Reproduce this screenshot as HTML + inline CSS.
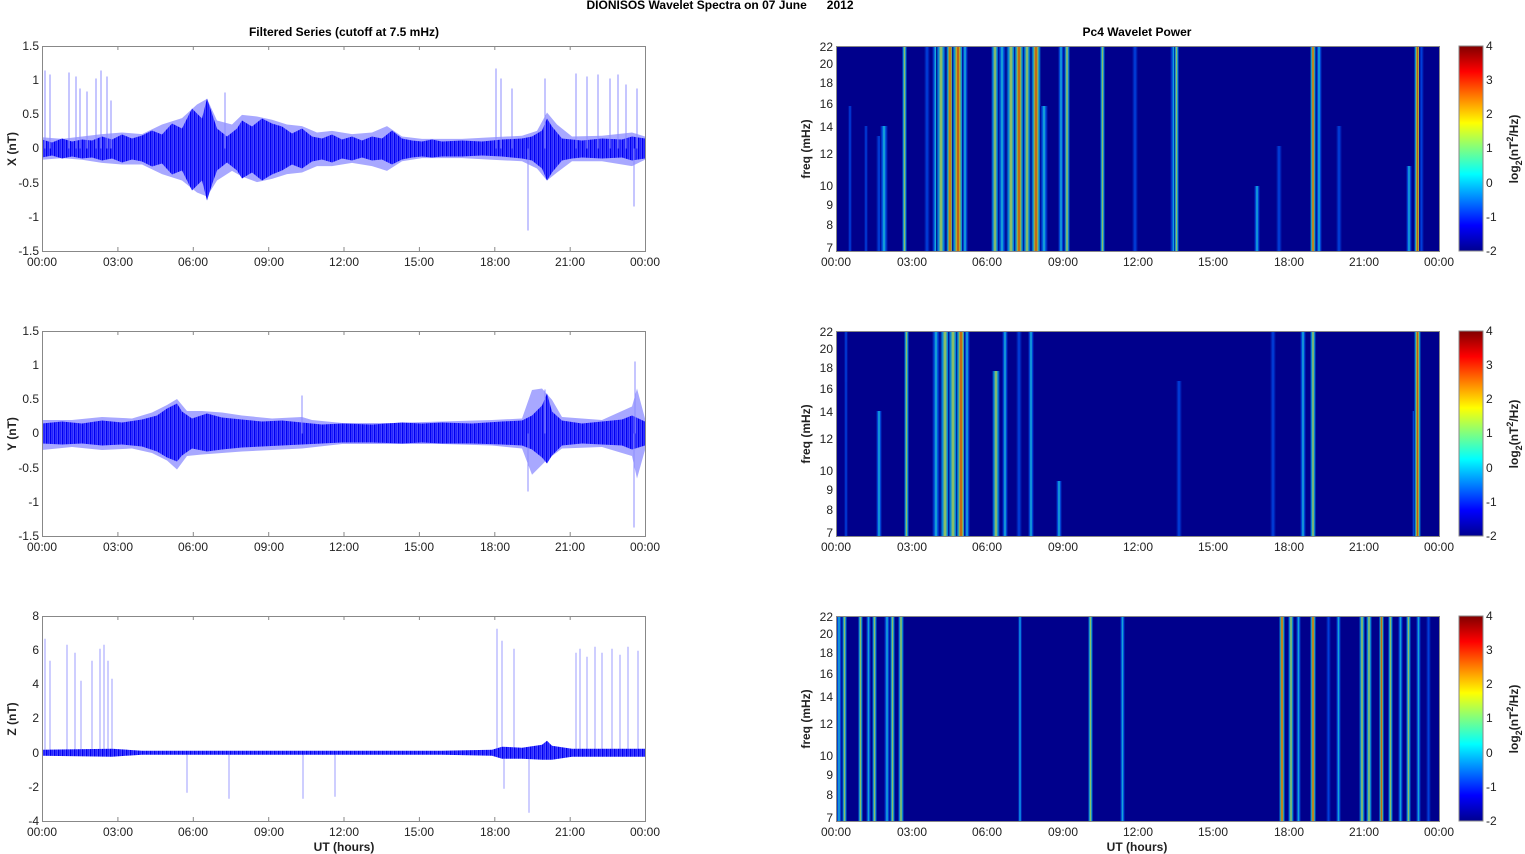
<!DOCTYPE html>
<html><head><meta charset="utf-8">
<style>
html,body{margin:0;padding:0;background:#fff;}
svg{display:block;font-family:"Liberation Sans",Arial,sans-serif;}
</style></head>
<body>
<svg width="1525" height="854" viewBox="0 0 1525 854" xmlns="http://www.w3.org/2000/svg">
<defs>
<linearGradient id="jet" x1="0" y1="1" x2="0" y2="0">
<stop offset="0" stop-color="#00008f"/><stop offset="0.125" stop-color="#0000ff"/>
<stop offset="0.375" stop-color="#00ffff"/><stop offset="0.625" stop-color="#ffff00"/>
<stop offset="0.875" stop-color="#ff0000"/><stop offset="1" stop-color="#800000"/>
</linearGradient>
<linearGradient id="sB"><stop offset="0" stop-color="#00008c"/><stop offset="0.5" stop-color="#0050f0"/><stop offset="1" stop-color="#00008c"/></linearGradient>
<linearGradient id="sC"><stop offset="0" stop-color="#00008c"/><stop offset="0.3" stop-color="#0060f0"/><stop offset="0.5" stop-color="#20e0e0"/><stop offset="0.7" stop-color="#0060f0"/><stop offset="1" stop-color="#00008c"/></linearGradient>
<linearGradient id="sY"><stop offset="0" stop-color="#00008c"/><stop offset="0.25" stop-color="#00a0f0"/><stop offset="0.5" stop-color="#c8f040"/><stop offset="0.75" stop-color="#00a0f0"/><stop offset="1" stop-color="#00008c"/></linearGradient>
<linearGradient id="sR"><stop offset="0" stop-color="#00008c"/><stop offset="0.2" stop-color="#00b0f0"/><stop offset="0.4" stop-color="#f0d000"/><stop offset="0.5" stop-color="#e03000"/><stop offset="0.6" stop-color="#f0d000"/><stop offset="0.8" stop-color="#00b0f0"/><stop offset="1" stop-color="#00008c"/></linearGradient>
<pattern id="nz" width="4" height="10" patternUnits="userSpaceOnUse">
<rect width="4" height="10" fill="#4848ff"/><rect x="0" width="1.3" height="10" fill="#0000f0"/><rect x="2.2" width="0.8" height="10" fill="#1818ff"/>
</pattern>
</defs>

<text x="720" y="9" font-size="12" font-weight="bold" text-anchor="middle" xml:space="preserve">DIONISOS Wavelet Spectra on 07 June      2012</text>
<text x="344" y="36" font-size="12" font-weight="bold" text-anchor="middle">Filtered Series (cutoff at 7.5 mHz)</text>
<text x="1137" y="36" font-size="12" font-weight="bold" text-anchor="middle">Pc4 Wavelet Power</text>

<g font-size="12" fill="#222">
<!-- X panel -->
<g transform="translate(42,148.5)">
<g transform="scale(1,0.8)">
<polygon fill="#a8a8ff" points="0,-14 20,-12 40,-15 60,-18 80,-20 100,-18 120,-30 140,-38 155,-55 165,-62 175,-35 190,-30 200,-42 215,-40 230,-36 245,-30 260,-28 275,-20 290,-22 310,-18 330,-20 345,-28 360,-15 380,-12 420,-12 450,-14 480,-16 495,-22 505,-45 515,-30 530,-15 560,-16 590,-20 603,-15 603,14 590,22 560,16 530,16 515,30 505,40 495,25 480,16 450,14 420,12 380,12 360,16 345,28 330,22 310,18 290,22 275,22 260,30 245,32 230,38 215,42 200,35 190,28 175,40 165,60 155,55 140,40 120,32 100,20 80,20 60,18 40,14 20,12 0,14"/>
</g>
<polygon fill="url(#nz)" points="0,-9 10,-6 20,-10 30,-7 40,-9 50,-8 60,-12 70,-9 80,-14 90,-10 100,-13 110,-18 120,-14 130,-25 140,-20 150,-40 160,-30 165,-50 170,-35 175,-20 185,-12 195,-20 200,-28 210,-22 220,-30 230,-25 240,-22 250,-15 260,-20 270,-12 280,-10 290,-14 300,-9 310,-12 320,-8 330,-12 340,-10 350,-18 360,-10 370,-8 380,-7 390,-9 400,-7 420,-8 440,-7 460,-9 480,-10 490,-12 500,-18 505,-30 510,-22 520,-10 530,-9 540,-8 560,-10 580,-9 590,-12 603,-10 603,10 590,12 580,9 560,10 540,9 530,10 520,12 510,24 505,32 500,20 490,12 480,10 460,8 440,7 420,8 400,8 390,9 380,8 370,9 360,11 350,16 340,11 330,12 320,9 310,12 300,10 290,14 280,11 270,13 260,20 250,16 240,22 230,26 220,32 210,24 200,30 195,22 185,14 175,22 170,36 165,52 160,32 150,42 140,22 130,26 120,15 110,18 100,13 90,11 80,14 70,10 60,12 50,9 40,10 30,8 20,10 10,7 0,9"/>
<g stroke="#8c8cff" stroke-width="1"><line x1="3" y1="0" x2="3" y2="-78"/><line x1="8" y1="0" x2="8" y2="-74"/><line x1="27" y1="0" x2="27" y2="-76"/><line x1="34" y1="0" x2="34" y2="-72"/><line x1="38" y1="0" x2="38" y2="-60"/><line x1="45" y1="0" x2="45" y2="-57"/><line x1="54" y1="0" x2="54" y2="-70"/><line x1="59" y1="0" x2="59" y2="-78"/><line x1="65" y1="0" x2="65" y2="-72"/><line x1="69" y1="0" x2="69" y2="-48"/><line x1="183" y1="0" x2="183" y2="-56"/><line x1="454" y1="0" x2="454" y2="-80"/><line x1="459" y1="0" x2="459" y2="-70"/><line x1="470" y1="0" x2="470" y2="-60"/><line x1="503" y1="0" x2="503" y2="-70"/><line x1="534" y1="0" x2="534" y2="-75"/><line x1="545" y1="0" x2="545" y2="-72"/><line x1="556" y1="0" x2="556" y2="-74"/><line x1="568" y1="0" x2="568" y2="-70"/><line x1="576" y1="0" x2="576" y2="-74"/><line x1="584" y1="0" x2="584" y2="-64"/><line x1="595" y1="0" x2="595" y2="-60"/><line x1="486" y1="0" x2="486" y2="82"/><line x1="592" y1="0" x2="592" y2="58"/></g>
</g>
<!-- Y panel -->
<g transform="translate(42,433.5)">
<g transform="scale(1,0.75)">
<polygon fill="#a8a8ff" points="0,-18 30,-18 60,-22 90,-20 110,-28 125,-38 135,-46 145,-30 160,-30 180,-28 200,-24 230,-20 260,-22 270,-18 300,-14 350,-14 400,-16 450,-18 480,-20 490,-58 500,-60 510,-45 520,-22 560,-18 590,-36 595,-60 603,-20 603,22 595,60 590,30 560,18 520,20 505,35 490,55 480,20 450,16 400,14 350,14 300,14 260,20 230,22 200,24 180,26 160,28 145,30 135,48 125,36 110,26 90,20 60,22 30,18 0,22"/>
</g>
<polygon fill="url(#nz)" points="0,-10 20,-12 40,-10 60,-13 80,-11 100,-14 115,-18 125,-25 135,-30 140,-22 150,-15 165,-20 180,-16 200,-14 220,-12 240,-13 260,-11 280,-9 300,-10 330,-9 360,-11 380,-10 400,-11 430,-10 460,-12 480,-13 490,-18 500,-28 505,-40 510,-22 520,-13 540,-10 560,-12 580,-14 590,-18 603,-12 603,12 590,16 580,12 560,11 540,10 520,12 510,22 505,30 500,24 490,16 480,12 460,11 430,10 400,10 380,9 360,10 330,9 300,9 280,10 260,11 240,12 220,13 200,14 180,16 165,18 150,15 140,22 135,28 125,24 115,18 100,13 80,11 60,12 40,10 20,11 0,10"/>
<g stroke="#8c8cff"><line x1="260" y1="0" x2="260" y2="-38"/><line x1="593" y1="0" x2="593" y2="-72"/><line x1="592" y1="0" x2="592" y2="94"/><line x1="486" y1="0" x2="486" y2="58"/><line x1="503" y1="0" x2="503" y2="-44"/></g>
</g>
<!-- Z panel -->
<g transform="translate(42,752.7)">
<g stroke="#9c9cff"><line x1="3" y1="0" x2="3" y2="-114"/><line x1="8" y1="0" x2="8" y2="-92"/><line x1="25" y1="0" x2="25" y2="-108"/><line x1="33" y1="0" x2="33" y2="-100"/><line x1="39" y1="0" x2="39" y2="-72"/><line x1="50" y1="0" x2="50" y2="-92"/><line x1="58" y1="0" x2="58" y2="-104"/><line x1="62" y1="0" x2="62" y2="-108"/><line x1="66" y1="0" x2="66" y2="-92"/><line x1="70" y1="0" x2="70" y2="-74"/><line x1="455" y1="0" x2="455" y2="-124"/><line x1="460" y1="0" x2="460" y2="-112"/><line x1="472" y1="0" x2="472" y2="-104"/><line x1="534" y1="0" x2="534" y2="-100"/><line x1="538" y1="0" x2="538" y2="-104"/><line x1="545" y1="0" x2="545" y2="-96"/><line x1="553" y1="0" x2="553" y2="-106"/><line x1="560" y1="0" x2="560" y2="-100"/><line x1="570" y1="0" x2="570" y2="-104"/><line x1="578" y1="0" x2="578" y2="-98"/><line x1="586" y1="0" x2="586" y2="-106"/><line x1="596" y1="0" x2="596" y2="-102"/><line x1="145" y1="0" x2="145" y2="40"/><line x1="187" y1="0" x2="187" y2="46"/><line x1="261" y1="0" x2="261" y2="46"/><line x1="293" y1="0" x2="293" y2="44"/><line x1="487" y1="0" x2="487" y2="60"/><line x1="462" y1="0" x2="462" y2="36"/></g>
<polygon fill="url(#nz)" points="0,-3 70,-4 100,-2 200,-2 300,-2 400,-2 450,-3 460,-6 480,-5 500,-8 505,-12 510,-7 530,-4 603,-4 603,4 530,4 510,7 500,7 480,6 460,6 450,3 400,2 300,2 200,2 100,2 70,4 0,3"/>
</g>

<g fill="none" stroke="#888" stroke-width="1">
<rect x="42.5" y="46.5" width="603" height="205"/>
<rect x="42.5" y="331.5" width="603" height="205"/>
<rect x="42.5" y="616.5" width="603" height="205"/>
</g>
<g stroke="#888">
<path d="M117.9,46v4M193.3,46v4M268.7,46v4M344,46v4M419.4,46v4M494.8,46v4M570.2,46v4M117.9,251v-4M193.3,251v-4M268.7,251v-4M344,251v-4M419.4,251v-4M494.8,251v-4M570.2,251v-4"/>
<path d="M117.9,331v4M193.3,331v4M268.7,331v4M344,331v4M419.4,331v4M494.8,331v4M570.2,331v4M117.9,536v-4M193.3,536v-4M268.7,536v-4M344,536v-4M419.4,536v-4M494.8,536v-4M570.2,536v-4"/>
<path d="M117.9,616v4M193.3,616v4M268.7,616v4M344,616v4M419.4,616v4M494.8,616v4M570.2,616v4M117.9,821v-4M193.3,821v-4M268.7,821v-4M344,821v-4M419.4,821v-4M494.8,821v-4M570.2,821v-4"/>
</g>
<g text-anchor="end">
<text x="39" y="50">1.5</text><text x="39" y="84">1</text><text x="39" y="118">0.5</text><text x="39" y="152">0</text><text x="39" y="187">-0.5</text><text x="39" y="221">-1</text><text x="39" y="255">-1.5</text>
<text x="39" y="335">1.5</text><text x="39" y="369">1</text><text x="39" y="403">0.5</text><text x="39" y="437">0</text><text x="39" y="472">-0.5</text><text x="39" y="506">-1</text><text x="39" y="540">-1.5</text>
<text x="39" y="620">8</text><text x="39" y="654">6</text><text x="39" y="688">4</text><text x="39" y="722">2</text><text x="39" y="757">0</text><text x="39" y="791">-2</text><text x="39" y="825">-4</text>
</g>
<g text-anchor="middle">
<g id="tl"><text x="42" y="266">00:00</text><text x="118" y="266">03:00</text><text x="193" y="266">06:00</text><text x="269" y="266">09:00</text><text x="344" y="266">12:00</text><text x="419" y="266">15:00</text><text x="495" y="266">18:00</text><text x="570" y="266">21:00</text><text x="645" y="266">00:00</text></g>
<use href="#tl" y="285"/><use href="#tl" y="570"/>
<use href="#tl" x="794"/><use href="#tl" x="794" y="285"/><use href="#tl" x="794" y="570"/>
</g>
<g font-weight="bold" text-anchor="middle">
<text transform="translate(16,149) rotate(-90)">X (nT)</text>
<text transform="translate(16,434) rotate(-90)">Y (nT)</text>
<text transform="translate(16,719) rotate(-90)">Z (nT)</text>
<text x="344" y="851">UT (hours)</text>
<text x="1137" y="851">UT (hours)</text>
<text transform="translate(810,149) rotate(-90)">freq (mHz)</text>
<text transform="translate(810,434) rotate(-90)">freq (mHz)</text>
<text transform="translate(810,719) rotate(-90)">freq (mHz)</text>
<text transform="translate(1518,149) rotate(-90)">log<tspan font-size="9" dy="4">2</tspan><tspan dy="-4">(nT</tspan><tspan font-size="9" dy="-5">2</tspan><tspan dy="5">/Hz)</tspan></text>
<text transform="translate(1518,434) rotate(-90)">log<tspan font-size="9" dy="4">2</tspan><tspan dy="-4">(nT</tspan><tspan font-size="9" dy="-5">2</tspan><tspan dy="5">/Hz)</tspan></text>
<text transform="translate(1518,719) rotate(-90)">log<tspan font-size="9" dy="4">2</tspan><tspan dy="-4">(nT</tspan><tspan font-size="9" dy="-5">2</tspan><tspan dy="5">/Hz)</tspan></text>
</g>
</g>

<!-- ===== RIGHT SPECTROGRAMS ===== -->
<g transform="translate(836,46)" opacity="1">
<rect width="603" height="205" fill="#00008c"/>
<g opacity="0.85">
<rect x="12" y="60" width="4" height="145" fill="url(#sB)"/>
<rect x="28" y="80" width="4" height="125" fill="url(#sB)"/>
<rect x="40" y="90" width="6" height="115" fill="url(#sB)"/>
<rect x="44" y="80" width="8" height="125" fill="url(#sC)"/>
<rect x="66" y="0" width="5" height="205" fill="url(#sY)"/>
<rect x="88" y="0" width="6" height="205" fill="url(#sB)"/>
<rect x="96" y="0" width="7" height="205" fill="url(#sC)"/>
<rect x="100" y="0" width="10" height="205" fill="url(#sY)"/>
<rect x="110" y="0" width="8" height="205" fill="url(#sR)"/>
<rect x="116" y="0" width="12" height="205" fill="url(#sR)"/>
<rect x="126" y="0" width="6" height="205" fill="url(#sC)"/>
<rect x="155" y="0" width="8" height="205" fill="url(#sY)"/>
<rect x="162" y="0" width="8" height="205" fill="url(#sC)"/>
<rect x="170" y="0" width="10" height="205" fill="url(#sY)"/>
<rect x="178" y="0" width="10" height="205" fill="url(#sR)"/>
<rect x="187" y="0" width="8" height="205" fill="url(#sY)"/>
<rect x="195" y="0" width="10" height="205" fill="url(#sR)"/>
<rect x="204" y="60" width="8" height="145" fill="url(#sC)"/>
<rect x="222" y="0" width="6" height="205" fill="url(#sC)"/>
<rect x="228" y="0" width="6" height="205" fill="url(#sY)"/>
<rect x="264" y="0" width="5" height="205" fill="url(#sY)"/>
<rect x="296" y="0" width="6" height="205" fill="url(#sB)"/>
<rect x="334" y="0" width="8" height="205" fill="url(#sC)"/>
<rect x="338" y="0" width="5" height="205" fill="url(#sY)"/>
<rect x="418" y="140" width="6" height="65" fill="url(#sC)"/>
<rect x="440" y="100" width="6" height="105" fill="url(#sB)"/>
<rect x="474" y="0" width="6" height="205" fill="url(#sR)"/>
<rect x="480" y="0" width="6" height="205" fill="url(#sC)"/>
<rect x="500" y="80" width="6" height="125" fill="url(#sB)"/>
<rect x="570" y="120" width="6" height="85" fill="url(#sC)"/>
<rect x="578" y="0" width="7" height="205" fill="url(#sR)"/>
<rect x="583" y="0" width="5" height="205" fill="url(#sB)"/>
</g></g>
<g transform="translate(836,331)">
<rect width="603" height="205" fill="#00008c"/>
<g opacity="0.85">
<rect x="8" y="0" width="4" height="205" fill="url(#sB)"/>
<rect x="40" y="80" width="6" height="125" fill="url(#sC)"/>
<rect x="68" y="0" width="5" height="205" fill="url(#sY)"/>
<rect x="96" y="0" width="8" height="205" fill="url(#sC)"/>
<rect x="104" y="0" width="10" height="205" fill="url(#sY)"/>
<rect x="112" y="0" width="10" height="205" fill="url(#sY)"/>
<rect x="120" y="0" width="10" height="205" fill="url(#sR)"/>
<rect x="128" y="0" width="6" height="205" fill="url(#sC)"/>
<rect x="156" y="40" width="8" height="165" fill="url(#sY)"/>
<rect x="166" y="0" width="6" height="205" fill="url(#sC)"/>
<rect x="180" y="0" width="6" height="205" fill="url(#sB)"/>
<rect x="192" y="0" width="6" height="205" fill="url(#sC)"/>
<rect x="220" y="150" width="6" height="55" fill="url(#sC)"/>
<rect x="340" y="50" width="6" height="155" fill="url(#sB)"/>
<rect x="434" y="0" width="6" height="205" fill="url(#sB)"/>
<rect x="464" y="0" width="6" height="205" fill="url(#sC)"/>
<rect x="474" y="0" width="6" height="205" fill="url(#sY)"/>
<rect x="576" y="80" width="6" height="125" fill="url(#sC)"/>
<rect x="578" y="0" width="7" height="205" fill="url(#sR)"/>
</g></g>
<g transform="translate(836,616)">
<rect width="603" height="205" fill="#00008c"/>
<g opacity="0.85">
<rect x="0" y="0" width="6" height="205" fill="url(#sC)"/>
<rect x="6" y="0" width="5" height="205" fill="url(#sY)"/>
<rect x="22" y="0" width="5" height="205" fill="url(#sY)"/>
<rect x="30" y="0" width="5" height="205" fill="url(#sC)"/>
<rect x="36" y="0" width="5" height="205" fill="url(#sY)"/>
<rect x="48" y="0" width="6" height="205" fill="url(#sC)"/>
<rect x="54" y="0" width="5" height="205" fill="url(#sY)"/>
<rect x="62" y="0" width="6" height="205" fill="url(#sY)"/>
<rect x="182" y="0" width="4" height="205" fill="url(#sC)"/>
<rect x="252" y="0" width="5" height="205" fill="url(#sY)"/>
<rect x="284" y="0" width="5" height="205" fill="url(#sC)"/>
<rect x="443" y="0" width="6" height="205" fill="url(#sR)"/>
<rect x="452" y="0" width="6" height="205" fill="url(#sY)"/>
<rect x="460" y="0" width="5" height="205" fill="url(#sC)"/>
<rect x="474" y="0" width="6" height="205" fill="url(#sR)"/>
<rect x="490" y="0" width="5" height="205" fill="url(#sB)"/>
<rect x="500" y="0" width="5" height="205" fill="url(#sC)"/>
<rect x="523" y="0" width="6" height="205" fill="url(#sY)"/>
<rect x="530" y="0" width="6" height="205" fill="url(#sY)"/>
<rect x="543" y="0" width="5" height="205" fill="url(#sR)"/>
<rect x="552" y="0" width="5" height="205" fill="url(#sY)"/>
<rect x="562" y="0" width="5" height="205" fill="url(#sC)"/>
<rect x="570" y="0" width="5" height="205" fill="url(#sY)"/>
<rect x="580" y="0" width="5" height="205" fill="url(#sC)"/>
<rect x="590" y="0" width="5" height="205" fill="url(#sB)"/>
</g></g>

<g fill="none" stroke="#888">
<rect x="836.5" y="46.5" width="603" height="205"/>
<rect x="836.5" y="331.5" width="603" height="205"/>
<rect x="836.5" y="616.5" width="603" height="205"/>
</g>
<g font-size="12" fill="#222" text-anchor="end">
<g id="fl"><text x="833" y="51">22</text><text x="833" y="68">20</text><text x="833" y="87">18</text><text x="833" y="108">16</text><text x="833" y="131">14</text><text x="833" y="158">12</text><text x="833" y="190">10</text><text x="833" y="209">9</text><text x="833" y="229">8</text><text x="833" y="252">7</text></g>
<use href="#fl" y="285"/><use href="#fl" y="570"/>
</g>

<g>
<rect x="1459" y="46" width="24" height="205" fill="url(#jet)" stroke="#888"/>
<rect x="1459" y="331" width="24" height="205" fill="url(#jet)" stroke="#888"/>
<rect x="1459" y="616" width="24" height="205" fill="url(#jet)" stroke="#888"/>
</g>
<g font-size="12" fill="#222">
<g id="cb"><text x="1486" y="50">4</text><text x="1486" y="84">3</text><text x="1486" y="118">2</text><text x="1486" y="152">1</text><text x="1486" y="187">0</text><text x="1486" y="221">-1</text><text x="1486" y="255">-2</text></g>
<use href="#cb" y="285"/><use href="#cb" y="570"/>
</g>
</svg>
</body></html>
